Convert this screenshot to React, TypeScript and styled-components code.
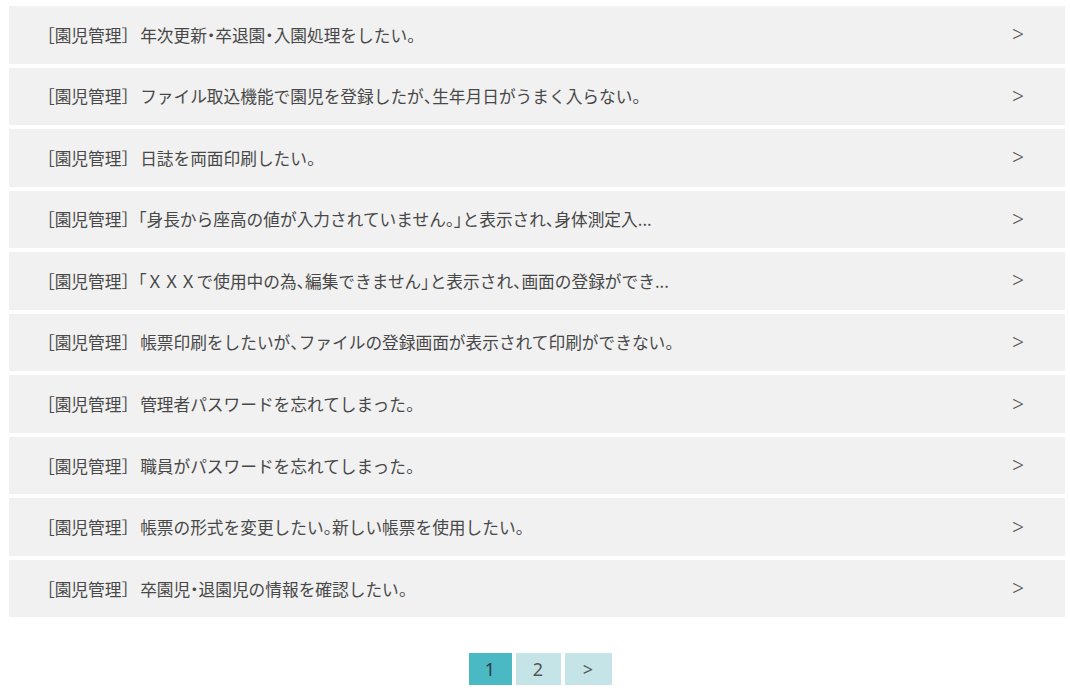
import styled, { createGlobalStyle } from "styled-components";

const GlobalStyle = createGlobalStyle`
  html, body {
    margin: 0;
    padding: 0;
    background: #ffffff;
  }
  body {
    font-family: "Noto Sans CJK JP", "Noto Sans", sans-serif;
    color: #4a4a4a;
  }
`;

const Page = styled.div`
  padding: 6px 5px 0 9px;
`;

const FaqList = styled.ul`
  list-style: none;
  margin: 0;
  padding: 0;
  display: flex;
  flex-direction: column;
  gap: 4.05px;
`;

const FaqItem = styled.li`
  display: flex;
  align-items: center;
  justify-content: space-between;
  height: 57.5px;
  padding: 0 41px 0 29px;
  box-sizing: border-box;
  background: #f1f1f1;
  font-size: 16.7px;
  color: #484848;
  cursor: pointer;
`;

const Title = styled.span`
  white-space: nowrap;
`;

// punctuation is set proportionally, kana and kanji keep full width
const Punct = styled.span`
  font-feature-settings: "palt";
`;

const Gap = styled.span`
  display: inline-block;
  width: 2px;
`;

const Arrow = styled.span`
  font-family: "Noto Sans", sans-serif;
  font-weight: 300;
  font-size: 21px;
  line-height: 1;
  color: #555555;
`;

const Pager = styled.nav`
  display: flex;
  justify-content: center;
  gap: 4px;
  margin-top: 36px;
  padding-left: 6px;
`;

const PageButton = styled.span<{ active?: boolean; w: number }>`
  display: flex;
  align-items: center;
  justify-content: center;
  width: ${({ w }) => w}px;
  height: 32px;
  background: ${({ active }) => (active ? "#4bb9c3" : "#c5e4e8")};
  color: ${({ active }) => (active ? "#2f3b3c" : "#555555")};
  font-family: "Noto Sans", sans-serif;
  font-size: 18px;
  cursor: pointer;
`;

const items = [
  " 年次更新・卒退園・入園処理をしたい。",
  " ファイル取込機能で園児を登録したが、生年月日がうまく入らない。",
  " 日誌を両面印刷したい。",
  "「身長から座高の値が入力されていません。」と表示され、身体測定入...",
  "「ＸＸＸで使用中の為、編集できません」と表示され、画面の登録ができ...",
  " 帳票印刷をしたいが、ファイルの登録画面が表示されて印刷ができない。",
  " 管理者パスワードを忘れてしまった。",
  " 職員がパスワードを忘れてしまった。",
  " 帳票の形式を変更したい。新しい帳票を使用したい。",
  " 卒園児・退園児の情報を確認したい。",
];

const PUNCT = /([・、。「」])/;

const renderTitle = (text: string) =>
  text.split(PUNCT).map((part, i) =>
    PUNCT.test(part) ? <Punct key={i}>{part}</Punct> : part.trimStart() === part ? part : <span key={i}><Gap />{part.trimStart()}</span>
  );

const App = () => {
  return (
    <Page>
      <GlobalStyle />
      <FaqList>
        {items.map((text) => (
          <FaqItem key={text}>
            <Title>
              ［園児管理］{renderTitle(text)}
            </Title>
            <Arrow>&gt;</Arrow>
          </FaqItem>
        ))}
      </FaqList>
      <Pager>
        <PageButton active w={43}>1</PageButton>
        <PageButton w={45}>2</PageButton>
        <PageButton w={47}>&gt;</PageButton>
      </Pager>
    </Page>
  );
};

export default App;
